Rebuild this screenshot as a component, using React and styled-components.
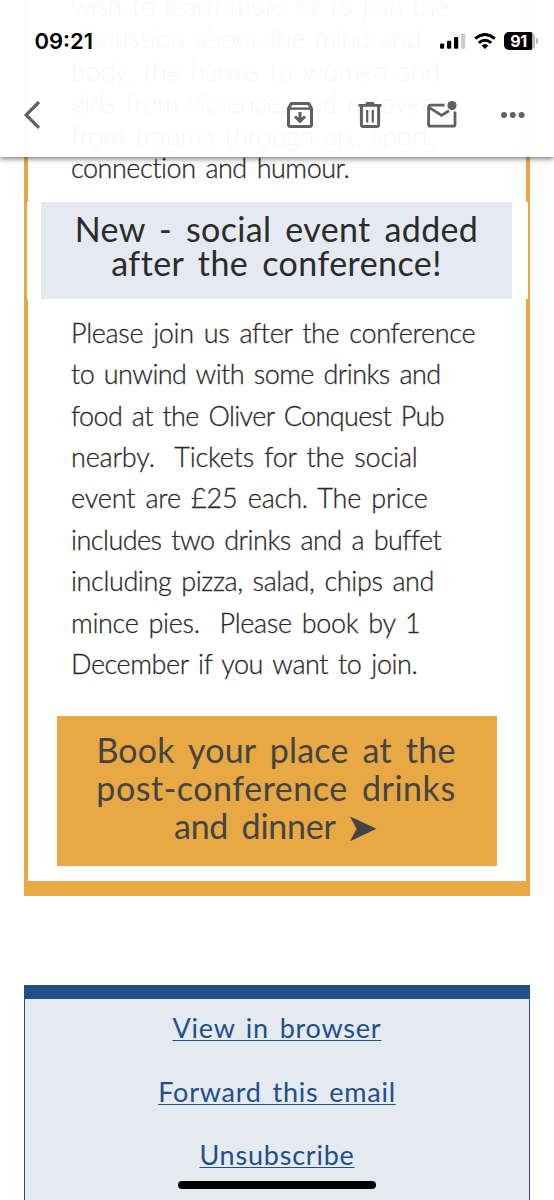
import React from 'react'
import styled, { createGlobalStyle } from 'styled-components'

const intro = [
  ['wish to learn more or to join the', -0.53],
  ['discussion about the mind and', -0.54],
  ['body, the harms to women and', -0.28],
  ['girls from violence, and recovery', -0.46],
  ['from trauma through art, sport,', -0.26],
  ['connection and humour.', -0.47],
]

const details = [
  ['Please join us after the conference', -0.33],
  ['to unwind with some drinks and', -0.58],
  ['food at the Oliver Conquest Pub', -0.63],
  ['nearby.\u00a0 Tickets for the social', -0.18],
  ['event are £25 each. The price', -0.16],
  ['includes two drinks and a buffet', -0.54],
  ['including pizza, salad, chips and', -0.4],
  ['mince pies.\u00a0 Please book by 1', -0.33],
  ['December if you want to join.', -0.43],
]

const links = ['View in browser', 'Forward this email', 'Unsubscribe']

const BackIcon = () => (
  <svg width='18' height='30' viewBox='0 0 18 30' fill='none' stroke='#5f6064' strokeWidth='3.2'>
    <path d='M16 2 L3.2 14.9 L16 27.8' />
  </svg>
)

const ArchiveIcon = () => (
  <svg width='28' height='28' viewBox='0 0 28 28' fill='none' stroke='#5f6064' strokeWidth='3'>
    <path d='M2.5 7.2 L5.2 2.5 H22.8 L25.5 7.2 V23.5 Q25.5 25.5 23.5 25.5 H4.5 Q2.5 25.5 2.5 23.5 Z' fill='#fff' strokeLinejoin='round' />
    <path d='M2.5 7.6 H25.5' strokeWidth='2.4' />
    <path d='M14 11 V20 M9 15.5 L14 20.3 L19 15.5' />
  </svg>
)

const TrashIcon = () => (
  <svg width='24' height='28' viewBox='0 0 24 28' fill='none' stroke='#5f6064' strokeWidth='3'>
    <path d='M3.4 4 V23.5 Q3.4 25.5 5.4 25.5 H18.6 Q20.6 25.5 20.6 23.5 V4' fill='#fff' />
    <path d='M0.5 4.3 H23.5 M7.8 2.4 H16.2' strokeWidth='2.8' />
    <path d='M9.2 9 V21.6 M14.8 9 V21.6' strokeWidth='2.2' />
  </svg>
)

const MailIcon = () => (
  <svg width='32' height='30' viewBox='0 0 32 30' fill='none' stroke='#5f6064' strokeWidth='2.8'>
    <path d='M18.6 5.2 H4.4 Q2.6 5.2 2.6 7 V24.4 Q2.6 26.2 4.4 26.2 H27.2 Q29 26.2 29 24.4 V11.6' />
    <path d='M3 7.4 L15.6 15.4 L23 10.8' />
    <circle cx='26' cy='5.6' r='4.6' fill='#5f6064' stroke='none' />
  </svg>
)

const MoreIcon = () => (
  <svg width='26' height='8' viewBox='0 0 26 8' fill='#5f6064'>
    <circle cx='4' cy='4' r='3' />
    <circle cx='12.8' cy='4' r='3' />
    <circle cx='21.6' cy='4' r='3' />
  </svg>
)

const SignalIcon = () => (
  <svg width='26' height='16' viewBox='0 0 26 16'>
    <rect x='0' y='10.4' width='4.2' height='5.4' rx='1.2' />
    <rect x='7' y='7.8' width='4.2' height='8' rx='1.2' />
    <rect x='14' y='4' width='4.2' height='11.8' rx='1.2' />
    <rect x='21' y='0.4' width='4.2' height='15.4' rx='1.2' fill='#ccc' />
  </svg>
)

const WifiIcon = () => (
  <svg width='22' height='16' viewBox='0 0 22 16' fill='none' stroke='#000' strokeWidth='3'>
    <path d='M1.2 5.6 Q11 -2.6 20.8 5.6' />
    <path d='M4.8 9.9 Q11 4.7 17.2 9.9' />
    <path d='M7.6 12.6 Q11 9.6 14.4 12.6 L11 16 Z' fill='#000' stroke='none' />
  </svg>
)

export default function App() {
  return (
    <>
      <GlobalStyle />
      <Screen>
        <Email>
          <Intro>
            {intro.map(([text, track]) => (
              <Line key={text} $track={track}>{text}</Line>
            ))}
          </Intro>
          <Banner>
            <BannerTitle>
              <Line $track={0.33}>New - social event added</Line>
              <Line $track={0.42}>after the conference!</Line>
            </BannerTitle>
          </Banner>
          <Details>
            {details.map(([text, track]) => (
              <Line key={text} $track={track}>{text}</Line>
            ))}
          </Details>
          <BookButton>
            <Line $track={0.22}>Book your place at the</Line>
            <Line $track={0.52}>post-conference drinks</Line>
            <Line $track={-0.25}>and dinner<Arrow>➤</Arrow></Line>
          </BookButton>
        </Email>

        <Footer>
          {links.map((text) => (
            <FooterLink key={text} href='#'>{text}</FooterLink>
          ))}
        </Footer>

        <Header>
          <StatusBar>
            <Time>09:21</Time>
            <Indicators>
              <SignalIcon />
              <WifiIcon />
              <Battery>
                <Charge>91</Charge>
                <Nub />
              </Battery>
            </Indicators>
          </StatusBar>
          <Toolbar>
            <BackIcon />
            <Actions>
              <ArchiveIcon />
              <TrashIcon />
              <MailIcon />
              <MoreIcon />
            </Actions>
          </Toolbar>
        </Header>

        <HomeIndicator />
      </Screen>
    </>
  )
}

const GlobalStyle = createGlobalStyle`
  * {
    box-sizing: border-box;
  }
  body {
    margin: 0;
    background: #fff;
  }
  svg {
    display: block;
    flex-shrink: 0;
  }
`

const Screen = styled.div`
  position: relative;
  width: 554px;
  height: 1200px;
  overflow: hidden;
  background: #fff;
  font-family: Lato, 'Open Sans', sans-serif;
  color: #2b2b2b;
`

const Email = styled.main`
  width: 506px;
  height: 908px;
  margin: -12px 0 0 24px;
  border: solid #e8a944;
  border-width: 0 4px 15px;
`

const Line = styled.div`
  white-space: pre;
  letter-spacing: ${({ $track }) => $track}px;
`

const Paragraph = styled.div`
  padding-left: 43px;
  font-size: 27px;
  font-weight: 300;
  word-spacing: 3px;
  -webkit-text-stroke: 0.3px #2b2b2b;
`

const Intro = styled(Paragraph)`
  height: 214px;
  padding-top: 1.5px;
  line-height: 32.5px;
`

const Banner = styled.div`
  margin: 0 -1.5px;
  padding: 0 15.5px 0 14.5px;
  background: #fff;
`

const BannerTitle = styled.h2`
  height: 97px;
  margin: 0;
  padding-top: 10px;
  background: #e5e9f1;
  font-size: 34px;
  font-weight: 400;
  line-height: 34.3px;
  word-spacing: 5px;
  text-align: center;
`

const Details = styled(Paragraph)`
  height: 416.5px;
  padding-top: 12.7px;
  line-height: 41.4px;
`

const BookButton = styled.div`
  width: 440px;
  height: 150.5px;
  margin-left: 29px;
  padding: 15px 2px 0 0;
  background: #e8a944;
  color: #444;
  font-size: 34px;
  line-height: 38.4px;
  word-spacing: 5px;
  text-align: center;
`

const Arrow = styled.span`
  margin-left: 10px;
  font-family: 'DejaVu Sans', sans-serif;
  font-size: 39px;
  line-height: 1px;
  vertical-align: -1.5px;
`

const Footer = styled.footer`
  display: flex;
  flex-direction: column;
  align-items: center;
  gap: 31.5px;
  width: 506px;
  height: 240px;
  margin: 89px 0 0 24px;
  padding-top: 13px;
  border: solid #215089;
  border-width: 14.5px 1.5px 0;
  background: #e5e9f0;
`

const FooterLink = styled.a`
  color: #215089;
  font-size: 27px;
  line-height: 32px;
  letter-spacing: 0.78px;
  word-spacing: 3px;
  text-decoration: underline;
  text-decoration-thickness: 1.3px;
  text-underline-offset: 2px;
  text-decoration-skip-ink: none;
`

const Header = styled.header`
  position: absolute;
  top: 0;
  left: 0;
  width: 554px;
  height: 156.5px;
  background: rgba(255, 255, 255, 0.965);
  box-shadow: 0 1px 6px rgba(0, 0, 0, 0.65);
`

const StatusBar = styled.div`
  display: flex;
  align-items: center;
  justify-content: space-between;
  height: 81px;
  padding: 0 16px 0 34.5px;
  color: #000;
`

const Time = styled.span`
  font-family: Inter, sans-serif;
  font-size: 22px;
  font-weight: 600;
`

const Indicators = styled.div`
  display: flex;
  align-items: center;
  gap: 8px;
`

const Battery = styled.div`
  display: flex;
  align-items: center;
  gap: 1px;
`

const Charge = styled.span`
  width: 31px;
  height: 18px;
  padding-right: 2px;
  border-radius: 5px;
  background: linear-gradient(90deg, #000 28px, #b4b4b4 28px);
  color: #fff;
  font-family: Inter, sans-serif;
  font-size: 16px;
  font-weight: 700;
  line-height: 18px;
  letter-spacing: -0.4px;
  text-align: center;
`

const Nub = styled.span`
  width: 2px;
  height: 6px;
  border-radius: 0 2px 2px 0;
  background: #b4b4b4;
`

const Toolbar = styled.div`
  display: flex;
  align-items: center;
  justify-content: space-between;
  height: 68px;
  padding: 0 28px 0 23px;
`

const Actions = styled.div`
  display: flex;
  align-items: center;
  gap: 44px;

  svg:last-child {
    margin-left: -2px;
  }
`

const HomeIndicator = styled.div`
  position: absolute;
  left: 178px;
  bottom: 11.5px;
  width: 198px;
  height: 8px;
  border-radius: 4px;
  background: #000;
`
